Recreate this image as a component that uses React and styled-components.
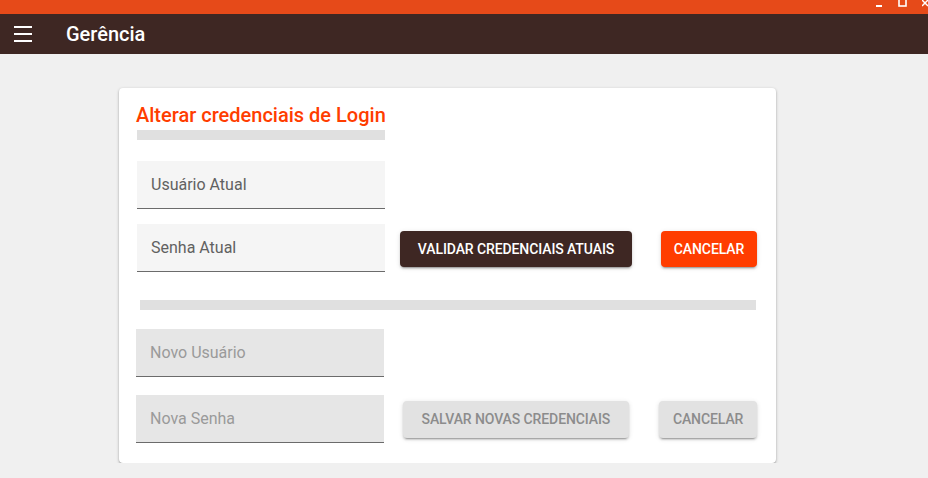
import React from "react";
import styled, { createGlobalStyle } from "styled-components";

const GlobalStyle = createGlobalStyle`
  html, body {
    margin: 0;
    padding: 0;
    background: #f0f0f0;
    font-family: Roboto, "Liberation Sans", Arial, sans-serif;
  }
`;

const TitleBar = styled.div`
  height: 14px;
  background: #e64a19;
  display: flex;
  justify-content: flex-end;
  align-items: flex-start;
  gap: 14px;
  overflow: hidden;
`;

const WinIcon = styled.svg`
  display: block;
`;

const AppBar = styled.header`
  height: 40px;
  background: #3e2723;
  display: flex;
  align-items: center;
  color: #fff;
`;

const MenuButton = styled.div`
  width: 18px;
  margin-left: 14px;
  display: flex;
  flex-direction: column;
  gap: 5px;
  span {
    display: block;
    height: 2px;
    background: #fff;
  }
`;

const AppTitle = styled.h1`
  margin: 0 0 0 34px;
  font-size: 20px;
  font-weight: 500;
`;

const Main = styled.main`
  padding: 34px 0 0 119px;
`;

const Card = styled.section`
  width: 657px;
  box-sizing: border-box;
  background: #fff;
  border-radius: 4px;
  box-shadow: 0 1px 3px rgba(0, 0, 0, 0.3), 0 1px 1px rgba(0, 0, 0, 0.14);
  padding: 16px 19px 20px 17px;
`;

const CardTitle = styled.h2`
  margin: 0;
  font-size: 20px;
  font-weight: 500;
  line-height: 22px;
  color: #ff3d00;
`;

const Divider = styled.div`
  height: 10px;
  background: #e0e0e0;
  width: ${(p) => p.$width || "auto"};
  margin: ${(p) => p.$margin};
`;

const Row = styled.div`
  display: flex;
  align-items: center;
  margin: ${(p) => p.$margin || "0"};
`;

const Field = styled.div`
  width: 248px;
  height: 48px;
  box-sizing: border-box;
  display: flex;
  align-items: center;
  padding-left: 14px;
  background: ${(p) => (p.$disabled ? "#e6e6e6" : "#f5f5f5")};
  border-bottom: 1px solid #6b6b6b;
  color: ${(p) => (p.$disabled ? "#9a9a9a" : "#616161")};
  font-size: 16px;
`;

const Button = styled.button`
  border: none;
  border-radius: 4px;
  height: ${(p) => p.$height || "36px"};
  width: ${(p) => p.$width};
  margin: ${(p) => p.$shift || "0"} 0 0 ${(p) => p.$gap};
  padding: 0;
  font-family: inherit;
  font-size: 14px;
  font-weight: 500;
  text-transform: uppercase;
  letter-spacing: -0.1px;
  background: ${(p) => p.$bg};
  color: ${(p) => p.$color};
  box-shadow: 0 3px 1px -2px rgba(0, 0, 0, 0.2), 0 2px 2px 0 rgba(0, 0, 0, 0.14),
    0 1px 5px 0 rgba(0, 0, 0, 0.12);
  cursor: pointer;
`;

export default function App() {
  return (
    <>
      <GlobalStyle />
      <TitleBar>
        <WinIcon width="8" height="8" viewBox="0 0 8 8">
          <rect x="0" y="5" width="6" height="2" fill="#fff" />
        </WinIcon>
        <WinIcon width="10" height="8" viewBox="0 0 10 8">
          <rect x="1" y="-1" width="7" height="7" fill="none" stroke="#fff" strokeWidth="1.6" />
        </WinIcon>
        <WinIcon width="6" height="8" viewBox="0 0 6 8">
          <path d="M0 6 L6 0 M0 0 L6 6" stroke="#fff" strokeWidth="1.5" />
        </WinIcon>
      </TitleBar>
      <AppBar>
        <MenuButton>
          <span />
          <span />
          <span />
        </MenuButton>
        <AppTitle>Gerência</AppTitle>
      </AppBar>
      <Main>
        <Card>
          <CardTitle>Alterar credenciais de Login</CardTitle>
          <Divider $width="248px" $margin="4px 0 0 1px" />
          <Row $margin="21px 0 0 1px">
            <Field>Usuário Atual</Field>
          </Row>
          <Row $margin="15px 0 0 1px">
            <Field>Senha Atual</Field>
            <Button $width="232px" $gap="15px" $shift="2px" $bg="#3e2723" $color="#fff">
              Validar credenciais atuais
            </Button>
            <Button $width="96px" $gap="29px" $shift="2px" $bg="#ff3d00" $color="#fff">
              Cancelar
            </Button>
          </Row>
          <Divider $margin="28px 1px 0 4px" />
          <Row $margin="19px 0 0 0">
            <Field $disabled>Novo Usuário</Field>
          </Row>
          <Row $margin="18px 0 0 0">
            <Field $disabled>Nova Senha</Field>
            <Button $width="227px" $height="37px" $gap="19px" $bg="#e2e2e2" $color="#8c8c8c">
              Salvar novas credenciais
            </Button>
            <Button $width="98px" $height="37px" $gap="30px" $bg="#e2e2e2" $color="#8c8c8c">
              Cancelar
            </Button>
          </Row>
        </Card>
      </Main>
    </>
  );
}
